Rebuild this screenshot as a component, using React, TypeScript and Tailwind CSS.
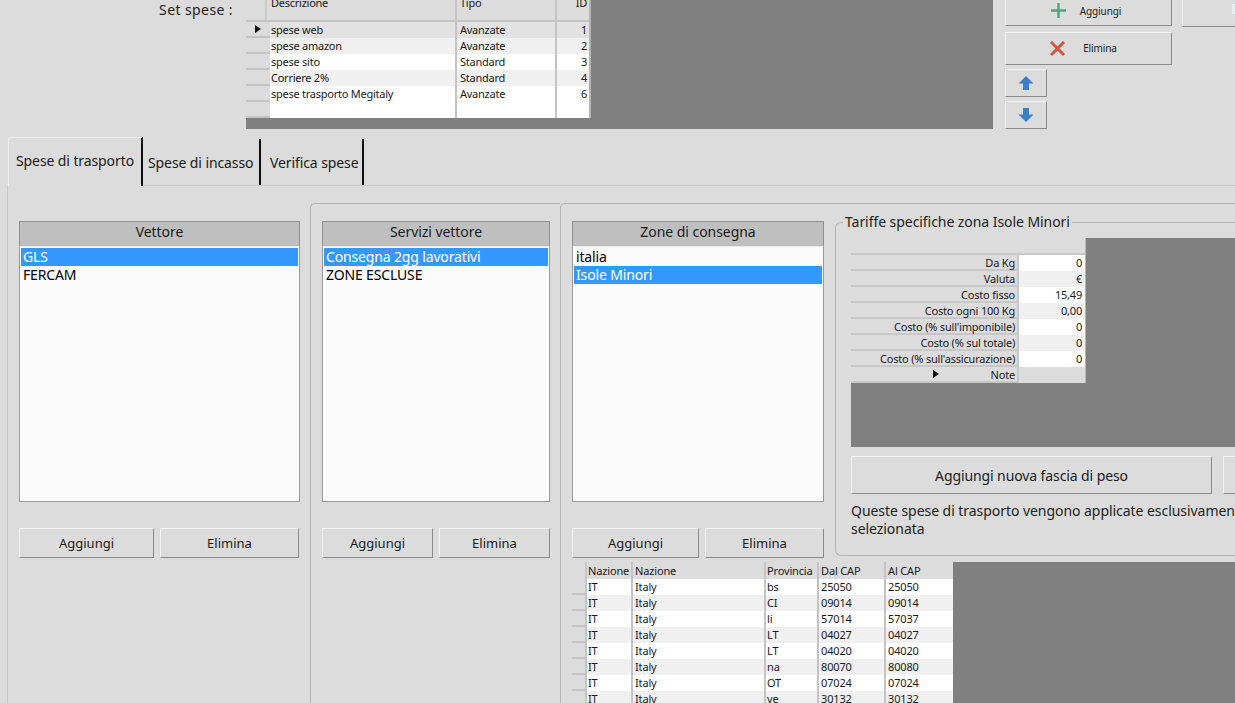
const font = "font-['Tahoma','Noto_Sans','DejaVu_Sans',sans-serif]";

const setRows = [
  ["spese web", "Avanzate", "1"],
  ["spese amazon", "Avanzate", "2"],
  ["spese sito", "Standard", "3"],
  ["Corriere 2%", "Standard", "4"],
  ["spese trasporto Megitaly", "Avanzate", "6"],
  ["", "", ""],
];

const tariffe = [
  ["Da Kg", "0"],
  ["Valuta", "€"],
  ["Costo fisso", "15,49"],
  ["Costo ogni 100 Kg", "0,00"],
  ["Costo (% sull'imponibile)", "0"],
  ["Costo (% sul totale)", "0"],
  ["Costo (% sull'assicurazione)", "0"],
  ["Note", ""],
];

const zone = [
  ["bs", "25050", "25050"],
  ["CI", "09014", "09014"],
  ["li", "57014", "57037"],
  ["LT", "04027", "04027"],
  ["LT", "04020", "04020"],
  ["na", "80070", "80080"],
  ["OT", "07024", "07024"],
  ["ve", "30132", "30132"],
];

function Arrow() {
  return (
    <svg width="6" height="8" viewBox="0 0 6 8">
      <path d="M0 0 L6 4 L0 8 Z" fill="#111" />
    </svg>
  );
}

function Btn({ w, h = "h-[30px]", children }: { w: string; h?: string; children?: React.ReactNode }) {
  return (
    <button className={`${w} ${h} shrink-0 flex items-center justify-center bg-[#dcdcdc] border border-t-[#f4f4f4] border-l-[#f4f4f4] border-r-[#8a8a8a] border-b-[#8a8a8a] text-[#1a1a1a]`}>
      {children}
    </button>
  );
}

function ListCol({ title, items, selected, w, leftW, rightW }: { title: string; items: string[]; selected: number; w: string; leftW: string; rightW: string }) {
  return (
    <div className={`${w} shrink-0 flex flex-col`}>
      <div className="h-[26px] pb-[5px] bg-[#bfbfbf] border border-[#8f8f8f] border-b-[#e8e8e8] flex items-center justify-center text-[14px] tracking-[-0.05px] text-[#1a1a1a]">{title}</div>
      <div className="h-[255px] bg-[#fbfbfb] border border-t-0 border-[#9a9a9a] pt-px">
        {items.map((t, i) => (
          <div key={t} className={`h-[18px] pl-[2px] mx-px text-[14px] tracking-[-0.15px] leading-[18px] ${i === selected ? "bg-[#3399ff] text-white" : "text-black"}`}>{t}</div>
        ))}
      </div>
      <div className="mt-[26px] flex gap-[6px] text-[13px]">
        <Btn w={leftW}><span className="pt-[2px]">Aggiungi</span></Btn>
        <Btn w={rightW}><span className="pt-[2px]">Elimina</span></Btn>
      </div>
    </div>
  );
}

export default function App() {
  return (
    <div className={`${font} w-[1235px] h-[703px] overflow-hidden bg-[#dcdcdc] flex flex-col`}>
      {/* griglia set spese */}
      <div className="h-[137px] shrink-0 flex items-start">
        <div className="w-[233px] shrink-0 pt-px text-right text-[14px] tracking-[0.4px] leading-[18px] text-[#222]">Set spese :</div>
        <div className="ml-[13px] w-[747px] h-[129px] shrink-0 bg-[#808080]">
          <div className="w-[345px] bg-[#dcdcdc] border-r-2 border-[#b4b4b4] text-[11px] tracking-[-0.25px] text-[#1a1a1a]">
            <div className="h-[22px] flex overflow-hidden border-b-2 border-[#c4c4c4]">
              <div className="w-[21px] border-r-2 border-[#c8c8c8]" />
              <div className="w-[190px] pl-1 leading-[6px] border-r-2 border-[#c4c4c4]">Descrizione</div>
              <div className="w-[100px] pl-[3px] leading-[6px] border-r-2 border-[#c4c4c4]">Tipo</div>
              <div className="flex-1 pr-[2px] text-right leading-[6px]">ID</div>
            </div>
            {setRows.map((r, i) => (
              <div key={i} className="h-[16px] flex leading-[15px]">
                <div className="w-[24px] flex items-center justify-center bg-[#dcdcdc] border-b-2 border-[#c4c4c4]">{i === 0 && <Arrow />}</div>
                <div className={`flex-1 flex ${i === 0 ? "bg-[#e2e2e2]" : i === 1 || i === 3 ? "bg-[#f0f0f0]" : "bg-white"}`}>
                  <div className="w-[187px] pl-[1px] border-r-2 border-[#c4c4c4]">{r[0]}</div>
                  <div className="w-[100px] pl-[3px] border-r-2 border-[#c4c4c4]">{r[1]}</div>
                  <div className="flex-1 pr-[2px] text-right">{r[2]}</div>
                </div>
              </div>
            ))}
          </div>
        </div>
        <div className="ml-[12px] w-[167px] shrink-0 flex flex-col">
          <div className="-mt-[4px]">
            <Btn w="w-[167px]">
              <svg width="15" height="15" viewBox="0 0 15 15" className="-mt-[2px] mr-[14px]"><path d="M7.5 0V15M0 7.5H15" stroke="#4fa583" strokeWidth="2.4" /></svg>
              <span className="mr-[5px] pt-px text-[10px] tracking-[-0.1px]">Aggiungi</span>
            </Btn>
          </div>
          <div className="mt-[6px]">
            <Btn w="w-[167px]" h="h-[33px]">
              <svg width="15" height="15" viewBox="0 0 15 15" className="-mt-px mr-[18px]"><path d="M1 1L14 14M14 1L1 14" stroke="#d9533f" strokeWidth="3" /></svg>
              <span className="mr-[10px] text-[10px] tracking-[-0.1px]">Elimina</span>
            </Btn>
          </div>
          <div className="mt-[4px]">
            <Btn w="w-[42px]" h="h-[28px]">
              <svg width="16" height="14" viewBox="0 0 16 14"><path d="M8 0L15.5 7.5H11V14H5V7.5H0.5Z" fill="#3b7fc4" /></svg>
            </Btn>
          </div>
          <div className="mt-[4px]">
            <Btn w="w-[42px]" h="h-[28px]">
              <svg width="16" height="14" viewBox="0 0 16 14"><path d="M8 14L15.5 6.5H11V0H5V6.5H0.5Z" fill="#3b7fc4" /></svg>
            </Btn>
          </div>
        </div>
        <div className="ml-[10px] -mt-[4px] flex-1 h-[31px] flex justify-end pt-[7px] border border-t-[#f4f4f4] border-l-[#f4f4f4] border-r-0 border-b-[#8a8a8a]">
          <div className="w-[3px] h-[10px] bg-[#e9edf2]" />
        </div>
      </div>

      {/* linguette */}
      <div className="h-[49px] shrink-0 ml-[8px] flex items-stretch border-b border-[#c8c8c8] text-[14px] tracking-[-0.1px] text-[#1a1a1a]">
        <div className="w-[135px] -mb-px pb-[3px] border-r-2 border-t border-l border-t-[#ececec] border-l-[#ececec] border-r-[#111] rounded-tl-[3px] flex items-center pl-[7px] bg-[#dcdcdc]">Spese di trasporto</div>
        <div className="w-[118px] mt-[2px] border-r-2 border-[#111] flex items-center pl-[5px]">Spese di incasso</div>
        <div className="w-[103px] mt-[2px] border-r-2 border-[#111] flex items-center pl-[9px]">Verifica spese</div>
      </div>

      {/* contenuto */}
      <div className="flex-1 min-h-0 ml-[7px] flex border-l border-[#c8c8c8]">
        <div className="w-[302px] shrink-0 pl-[11px] pt-[35px]">
          <ListCol title="Vettore" items={["GLS", "FERCAM"]} selected={0} w="w-[281px]" leftW="w-[135px]" rightW="w-[139px]" />
        </div>
        <div className="w-[250px] shrink-0 mt-[17px] border-l border-t border-[#b4b4b4] rounded-tl-[5px] pl-[11px] pt-[17px]">
          <ListCol title="Servizi vettore" items={["Consegna 2gg lavorativi", "ZONE ESCLUSE"]} selected={0} w="w-[228px]" leftW="w-[111px]" rightW="w-[111px]" />
        </div>
        <div className="flex-1 min-w-0 mt-[17px] border-l border-t border-[#b4b4b4] rounded-tl-[5px] pl-[11px] pt-[17px] flex flex-col">
          <div className="flex">
            <ListCol title="Zone di consegna" items={["italia", "Isole Minori"]} selected={1} w="w-[252px]" leftW="w-[127px]" rightW="w-[119px]" />
            <div className="relative ml-[11px] flex-1 mt-px h-[334px] border border-r-0 border-[#b4b4b4] rounded-l-[6px] pl-[15px] pt-[15px]">
              <div className="absolute -top-[10px] left-[7px] px-[2px] bg-[#dcdcdc] text-[14px] tracking-[-0.06px] leading-[18px] text-[#222]">Tariffe specifiche zona Isole Minori</div>
              <div className="h-[209px] bg-[#808080]">
                <div className="w-[235px] text-[11px] tracking-[-0.2px] leading-[15px] text-[#1a1a1a] bg-[#dcdcdc] border-r border-[#b4b4b4]">
                  <div className="h-[17px] border-b-2 border-[#c8c8c8]" />
                  {tariffe.map((r, i) => (
                    <div key={r[0]} className="h-[16px] flex">
                      <div className="w-[168px] flex items-center justify-end pr-[2px] border-r-2 border-b-2 border-[#c8c8c8]">
                        {r[0] === "Note" && <span className="mr-[52px]"><Arrow /></span>}
                        {r[0]}
                      </div>
                      <div className={`flex-1 pr-[3px] text-right ${i === 7 ? "bg-[#dcdcdc]" : i % 2 === 0 ? "bg-white" : "bg-[#f0f0f0]"}`}>{r[1]}</div>
                    </div>
                  ))}
                </div>
              </div>
              <div className="mt-[9px] flex gap-[11px] text-[14px] tracking-[-0.1px]">
                <Btn w="w-[361px]" h="h-[38px]">Aggiungi nuova fascia di peso</Btn>
                <Btn w="w-[60px]" h="h-[38px]" />
              </div>
              <div className="mt-[8px] w-[520px] text-[14px] tracking-[-0.05px] leading-[18px] text-[#222]">
                Queste spese di trasporto vengono applicate esclusivamente alla zona
                <br />
                selezionata
              </div>
            </div>
          </div>
          <div className="mt-[4px] flex bg-[#808080] h-[150px] text-[11px] tracking-[-0.15px] text-[#1a1a1a]">
            <div className="w-[381px] shrink-0 bg-[#dcdcdc]">
              <div className="h-[17px] flex leading-[18px]">
                <div className="w-[15px] border-r-2 border-[#c4c4c4]" />
                <div className="w-[46px] pl-[1px] border-r-2 border-[#c4c4c4]">Nazione</div>
                <div className="w-[133px] pl-[2px] border-r-2 border-[#c4c4c4]">Nazione</div>
                <div className="w-[53px] pl-[1px] border-r-2 border-[#c4c4c4]">Provincia</div>
                <div className="w-[67px] pl-[2px] border-r-2 border-[#c4c4c4]">Dal CAP</div>
                <div className="flex-1 pl-[2px]">Al CAP</div>
              </div>
              {zone.map((r, i) => (
                <div key={i} className={`h-[16px] flex leading-[15px] ${i % 2 === 0 ? "bg-white" : "bg-[#f0f0f0]"}`}>
                  <div className="w-[15px] bg-[#dcdcdc] border-r-2 border-b-2 border-[#c4c4c4]" />
                  <div className="w-[46px] pl-[1px] border-r-2 border-[#c4c4c4]">IT</div>
                  <div className="w-[133px] pl-[2px] border-r-2 border-[#c4c4c4]">Italy</div>
                  <div className="w-[53px] pl-[1px] border-r-2 border-[#c4c4c4]">{r[0]}</div>
                  <div className="w-[67px] pl-[2px] border-r-2 border-[#c4c4c4]">{r[1]}</div>
                  <div className="flex-1 pl-[2px]">{r[2]}</div>
                </div>
              ))}
            </div>
          </div>
        </div>
      </div>
    </div>
  );
}
